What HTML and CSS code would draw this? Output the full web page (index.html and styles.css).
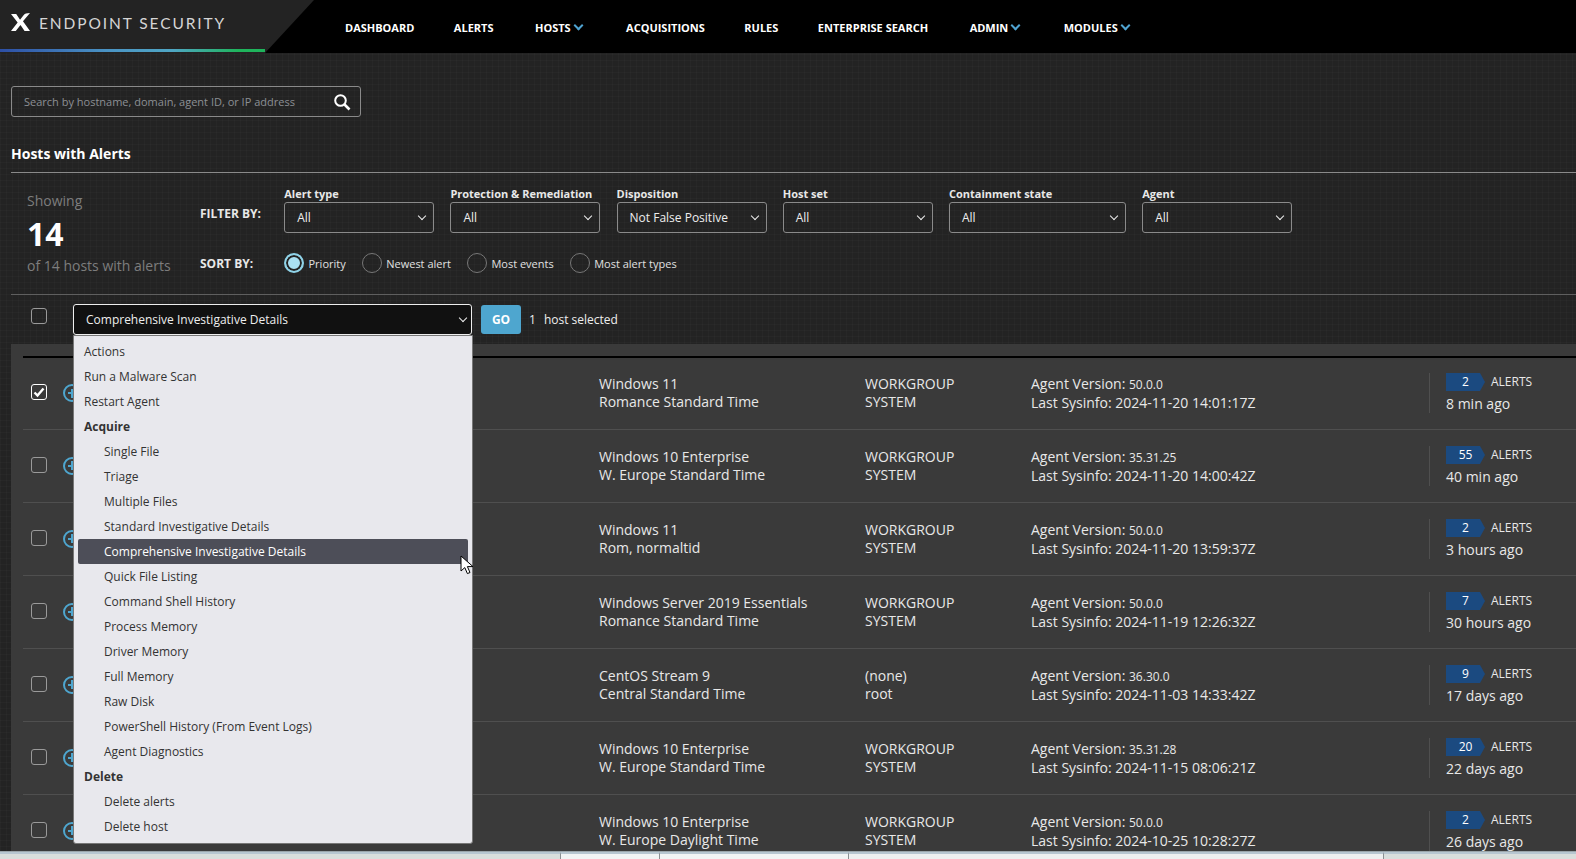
FILE: index.html
```html
<!DOCTYPE html>
<html lang="en">
<head>
    <meta charset="UTF-8">
    <title>Endpoint Security - Hosts with Alerts</title>
    <link rel="stylesheet" href="styles.css">
</head>
<body>
    <header class="topbar">
        <div class="brand">
            <svg class="brand-x" width="19" height="19" viewBox="0 0 20 20"><path d="M0 1h5.500l4 6 3.500-4.500c1.400-1.600 3.500-2.400 7-2.400l-7.400 8.600L20 19h-5.700l-4.300-6.500L5 19H0l7-9z" fill="#fff"/></svg>
            <span class="brand-name">ENDPOINT SECURITY</span>
        </div>
        <nav class="mainnav">
            <a>DASHBOARD</a>
            <a>ALERTS</a>
            <a class="pushed">HOSTS <i class="nav-caret"></i></a>
            <a>ACQUISITIONS</a>
            <a>RULES</a>
            <a>ENTERPRISE SEARCH</a>
            <a class="pushed">ADMIN <i class="nav-caret"></i></a>
            <a>MODULES <i class="nav-caret"></i></a>
        </nav>
    </header>

    <main class="page">
        <div class="search-box">
            <span>Search by hostname, domain, agent ID, or IP address</span>
            <svg width="18" height="18" viewBox="0 0 18 18" fill="none" stroke="#fff"><circle cx="7.500" cy="7.500" r="5.300" stroke-width="2"/><path d="M11.500 11.500l5 5" stroke-width="2.600"/></svg>
        </div>

        <h1 class="page-title">Hosts with Alerts</h1>

        <section class="filters">
            <div class="showing">
                <div class="showing-label">Showing</div>
                <div class="showing-count">14</div>
                <div class="showing-label">of 14 hosts with alerts</div>
            </div>
            <div class="filter-rows">
                <div class="filter-row">
                    <div class="row-label">FILTER BY:</div>
                    <label class="field w150">Alert type<span class="fake-select">All<i class="chev"></i></span></label>
                    <label class="field w150">Protection &amp; Remediation<span class="fake-select">All<i class="chev"></i></span></label>
                    <label class="field w150">Disposition<span class="fake-select">Not False Positive<i class="chev"></i></span></label>
                    <label class="field w150">Host set<span class="fake-select">All<i class="chev"></i></span></label>
                    <label class="field w177">Containment state<span class="fake-select">All<i class="chev"></i></span></label>
                    <label class="field w150">Agent<span class="fake-select">All<i class="chev"></i></span></label>
                </div>
                <div class="sort-row">
                    <div class="row-label">SORT BY:</div>
                    <span class="radio checked"><i></i>Priority</span>
                    <span class="radio"><i></i>Newest alert</span>
                    <span class="radio"><i></i>Most events</span>
                    <span class="radio"><i></i>Most alert types</span>
                </div>
            </div>
        </section>

        <section class="actionbar">
            <span class="check"></span>
            <div class="action-select">Comprehensive Investigative Details<i class="chev"></i></div>
            <button class="go-btn">GO</button>
            <span class="selected-count"><span class="selected-num">1</span>host selected</span>
        </section>

        <section class="hosts">
            <div class="host-row">
                <span class="check on"><svg width="14" height="14" viewBox="0 0 14 14" fill="none" stroke="#fff" stroke-width="2.400"><path d="M2.500 7.500l3 3 6-7"/></svg></span>
                <i class="expand"></i>
                <div class="host-name"></div>
                <div class="col-os">Windows 11<br>Romance Standard Time</div>
                <div class="col-domain">WORKGROUP<br>SYSTEM</div>
                <div class="col-agent">Agent Version: <small>50.0.0</small><br>Last Sysinfo: 2024-11-20 14:01:17Z</div>
                <div class="col-alerts"><div><b class="badge">2</b>ALERTS</div><div class="ago">8 min ago</div></div>
            </div>
            <div class="host-row">
                <span class="check"></span>
                <i class="expand"></i>
                <div class="host-name"></div>
                <div class="col-os">Windows 10 Enterprise<br>W. Europe Standard Time</div>
                <div class="col-domain">WORKGROUP<br>SYSTEM</div>
                <div class="col-agent">Agent Version: <small>35.31.25</small><br>Last Sysinfo: 2024-11-20 14:00:42Z</div>
                <div class="col-alerts"><div><b class="badge">55</b>ALERTS</div><div class="ago">40 min ago</div></div>
            </div>
            <div class="host-row">
                <span class="check"></span>
                <i class="expand"></i>
                <div class="host-name"></div>
                <div class="col-os">Windows 11<br>Rom, normaltid</div>
                <div class="col-domain">WORKGROUP<br>SYSTEM</div>
                <div class="col-agent">Agent Version: <small>50.0.0</small><br>Last Sysinfo: 2024-11-20 13:59:37Z</div>
                <div class="col-alerts"><div><b class="badge">2</b>ALERTS</div><div class="ago">3 hours ago</div></div>
            </div>
            <div class="host-row">
                <span class="check"></span>
                <i class="expand"></i>
                <div class="host-name"></div>
                <div class="col-os">Windows Server 2019 Essentials<br>Romance Standard Time</div>
                <div class="col-domain">WORKGROUP<br>SYSTEM</div>
                <div class="col-agent">Agent Version: <small>50.0.0</small><br>Last Sysinfo: 2024-11-19 12:26:32Z</div>
                <div class="col-alerts"><div><b class="badge">7</b>ALERTS</div><div class="ago">30 hours ago</div></div>
            </div>
            <div class="host-row">
                <span class="check"></span>
                <i class="expand"></i>
                <div class="host-name"></div>
                <div class="col-os">CentOS Stream 9<br>Central Standard Time</div>
                <div class="col-domain">(none)<br>root</div>
                <div class="col-agent">Agent Version: <small>36.30.0</small><br>Last Sysinfo: 2024-11-03 14:33:42Z</div>
                <div class="col-alerts"><div><b class="badge">9</b>ALERTS</div><div class="ago">17 days ago</div></div>
            </div>
            <div class="host-row">
                <span class="check"></span>
                <i class="expand"></i>
                <div class="host-name"></div>
                <div class="col-os">Windows 10 Enterprise<br>W. Europe Standard Time</div>
                <div class="col-domain">WORKGROUP<br>SYSTEM</div>
                <div class="col-agent">Agent Version: <small>35.31.28</small><br>Last Sysinfo: 2024-11-15 08:06:21Z</div>
                <div class="col-alerts"><div><b class="badge">20</b>ALERTS</div><div class="ago">22 days ago</div></div>
            </div>
            <div class="host-row">
                <span class="check"></span>
                <i class="expand"></i>
                <div class="host-name"></div>
                <div class="col-os">Windows 10 Enterprise<br>W. Europe Daylight Time</div>
                <div class="col-domain">WORKGROUP<br>SYSTEM</div>
                <div class="col-agent">Agent Version: <small>50.0.0</small><br>Last Sysinfo: 2024-10-25 10:28:27Z</div>
                <div class="col-alerts"><div><b class="badge">2</b>ALERTS</div><div class="ago">26 days ago</div></div>
            </div>
        </section>
    </main>

    <!-- open action list, sits over the host rows -->
    <ul class="action-menu">
        <li>Actions</li>
        <li>Run a Malware Scan</li>
        <li>Restart Agent</li>
        <li class="group">Acquire</li>
        <li class="sub">Single File</li>
        <li class="sub">Triage</li>
        <li class="sub">Multiple Files</li>
        <li class="sub">Standard Investigative Details</li>
        <li class="sub active">Comprehensive Investigative Details</li>
        <li class="sub">Quick File Listing</li>
        <li class="sub">Command Shell History</li>
        <li class="sub">Process Memory</li>
        <li class="sub">Driver Memory</li>
        <li class="sub">Full Memory</li>
        <li class="sub">Raw Disk</li>
        <li class="sub">PowerShell History (From Event Logs)</li>
        <li class="sub">Agent Diagnostics</li>
        <li class="group">Delete</li>
        <li class="sub">Delete alerts</li>
        <li class="sub">Delete host</li>
    </ul>
    <svg class="mouse-cursor" width="14" height="21" viewBox="0 0 14 21"><path d="M1 1v15l3.800-3.400 2.600 6 2.600-1.100-2.600-5.900H13z" fill="#fff" stroke="#000"/></svg>

    <!-- edge of the window underneath -->
    <div class="bottom-strip">
        <div class="strip-cell w561"></div>
        <div class="strip-cell w99"></div>
        <div class="strip-cell w189"></div>
        <div class="strip-cell w535"></div>
        <div class="strip-cell grow"></div>
    </div>
</body>
</html>
```

FILE: styles.css
```css
html, body {
    margin: 0;
    height: 100%;
    overflow: hidden;
}

body {
    position: relative;
    font-family: "Open Sans", "Noto Sans", sans-serif;
    color: #e6e6e6;
    background-color: #232323;
    background-image:
        linear-gradient(rgba(255,255,255,0.018) 1px, transparent 1px),
        linear-gradient(90deg, rgba(255,255,255,0.018) 1px, transparent 1px);
    background-size: 6px 6px;
}

/* top bar */
.topbar {
    display: flex;
    height: 53px;
    background-color: #000;
}

.brand {
    position: relative;
    display: flex;
    align-items: flex-start;
    gap: 9px;
    box-sizing: border-box;
    width: 314px;
    height: 53px;
    padding: 13px 0 0 11px;
    background: #232323;
    clip-path: polygon(0 0, 100% 0, 265px 100%, 0 100%);
}

.brand::after {
    content: "";
    position: absolute;
    left: 0;
    bottom: 1px;
    width: 265px;
    height: 3px;
    background: linear-gradient(90deg, #2d4fa5 0%, #4a93c4 40%, #4fa6c4 65%, #1fb45c 90%);
}

.brand-name {
    font-family: "Lato", "Open Sans", sans-serif;
    font-size: 15.500px;
    letter-spacing: 1.900px;
    line-height: 20px;
    color: #d5d5d5;
}

.mainnav {
    display: flex;
    align-items: center;
    gap: 39.500px;
    padding: 2px 0 0 31px;
}

.mainnav a {
    font-size: 11px;
    font-weight: 700;
    color: #fff;
}

.mainnav .pushed {
    margin-left: 2px;
}

.nav-caret {
    display: inline-block;
    width: 5px;
    height: 5px;
    margin: 0 5px 3px 1px;
    border-right: 2.500px solid #4fa3d1;
    border-bottom: 2.500px solid #4fa3d1;
    transform: rotate(45deg);
}

/* page */
.page {
    padding: 33px 0 0 11px;
}

.search-box {
    display: flex;
    align-items: center;
    justify-content: space-between;
    box-sizing: border-box;
    width: 350px;
    height: 31px;
    padding: 0 9px 0 12px;
    border: 1px solid #8a8a8a;
    border-radius: 3px;
    font-size: 11px;
    color: #8c8f94;
}

.page-title {
    margin: 27px 0 0;
    height: 28px;
    font-size: 14px;
    line-height: 20px;
    font-weight: 700;
    color: #fff;
    border-bottom: 1px solid #8a8a8a;
}

/* filters */
.filters {
    display: flex;
    height: 121px;
    border-bottom: 1px solid #5f5f5f;
}

.showing {
    width: 189px;
    padding: 18px 0 0 16px;
    box-sizing: border-box;
}

.showing-label {
    font-size: 14px;
    line-height: 20px;
    color: #7d7d7d;
}

.showing-count {
    height: 44px;
    margin-top: 1px;
    font-size: 32px;
    line-height: 44px;
    font-weight: 700;
    color: #fff;
}

.filter-rows {
    padding-top: 13px;
}

.filter-row {
    display: flex;
    gap: 16.200px;
}

.row-label {
    width: 68px;
    font-size: 12px;
    font-weight: 700;
    color: #e8e8e8;
    align-self: center;
}

.filter-row .row-label {
    padding-top: 7px;
}

.field {
    display: flex;
    flex-direction: column;
    font-size: 11px;
    line-height: 15px;
    font-weight: 700;
    color: #e8e8e8;
}

.w150 { width: 150px; }
.w177 { width: 177px; }

.fake-select {
    position: relative;
    box-sizing: border-box;
    height: 31px;
    margin-top: 1px;
    padding-left: 12px;
    border: 1px solid #8a8a8a;
    border-radius: 3px;
    font-size: 12px;
    font-weight: 400;
    line-height: 29px;
    color: #eee;
}

.chev {
    position: absolute;
    top: 10px;
    right: 8px;
    width: 5px;
    height: 5px;
    border-right: 1.500px solid #eee;
    border-bottom: 1.500px solid #eee;
    transform: rotate(45deg);
}

.sort-row {
    display: flex;
    align-items: center;
    margin-top: 15px;
    height: 30px;
    gap: 16px;
}

.radio {
    display: flex;
    align-items: center;
    gap: 4.500px;
    font-size: 11px;
    color: #e0e0e0;
}

.radio i {
    display: block;
    box-sizing: border-box;
    width: 20px;
    height: 20px;
    border: 1px solid #777;
    border-radius: 50%;
}

.radio.checked i {
    border: 2px solid #8fd3e8;
    background: #a9e0f2;
    box-shadow: inset 0 0 0 2px #232323;
}

/* bulk action bar */
.actionbar {
    display: flex;
    align-items: center;
    height: 49px;
    padding-left: 20px;
}

.check {
    display: flex;
    align-items: center;
    justify-content: center;
    flex: none;
    box-sizing: border-box;
    width: 16px;
    height: 16px;
    border: 1px solid #9a9a9a;
    border-radius: 3px;
}

.actionbar .check {
    margin-bottom: 7px;
}

.check.on {
    border-color: #fff;
}

.action-select {
    position: relative;
    box-sizing: border-box;
    width: 399px;
    height: 31px;
    margin-left: 26px;
    padding-left: 12px;
    border: 1px solid #eee;
    border-radius: 3px;
    background: #111;
    font-size: 12px;
    line-height: 29px;
    color: #eee;
}

.action-select .chev {
    right: 5px;
}

.go-btn {
    width: 40px;
    height: 29px;
    margin-left: 9px;
    border: 0;
    border-radius: 3px;
    background: #4ea6cf;
    color: #fff;
    font-family: inherit;
    font-size: 12px;
    font-weight: 700;
}

.selected-count {
    margin-left: 8px;
    font-size: 12px;
    color: #eee;
}

.selected-num {
    margin-right: 8px;
}

/* host list */
.hosts {
    box-sizing: border-box;
    height: 520px;
    padding: 12px 0 0 12px;
    background: #3a3a3a;
    overflow: hidden;
}

.host-row {
    display: flex;
    align-items: center;
    height: 73px;
    box-sizing: border-box;
    border-bottom: 1px solid #4f4f4f;
    font-size: 14px;
    line-height: 18px;
    color: #e8e8e8;
}

.host-row:first-child {
    border-top: 2px solid #000;
    height: 74px;
}

.host-row:first-child .col-os,
.host-row:first-child .col-domain {
    margin-top: -2px;
}

.host-row .check {
    margin: 0 0 3px 8px;
}

.expand {
    display: block;
    flex: none;
    box-sizing: border-box;
    width: 18px;
    height: 18px;
    margin: 0 0 1px 16px;
    border: 2.500px solid #4ea6cf;
    border-radius: 50%;
    background:
        linear-gradient(#4ea6cf, #4ea6cf) center / 9px 2px no-repeat,
        linear-gradient(#4ea6cf, #4ea6cf) center / 2px 9px no-repeat;
}

.host-name { width: 518px; flex: none; }
.col-os { width: 266px; flex: none; }
.col-domain { width: 166px; flex: none; }
.col-agent { width: 398px; flex: none; }

.col-agent small {
    font-size: 12px;
}

.col-alerts {
    box-sizing: border-box;
    height: 40px;
    margin-top: -1px;
    padding-left: 16px;
    border-left: 1px solid #4f4f4f;
    font-size: 12px;
    line-height: 18px;
}

.badge {
    position: relative;
    display: inline-block;
    box-sizing: border-box;
    width: 34px;
    height: 18px;
    margin-right: 11px;
    padding-left: 5px;
    background: #1b4a80;
    font-weight: 400;
    text-align: center;
    color: #fff;
}

.badge::after {
    content: "";
    position: absolute;
    left: 100%;
    top: 0;
    border-left: 5px solid #1b4a80;
    border-top: 9px solid transparent;
    border-bottom: 9px solid transparent;
}

.ago {
    margin-top: 4px;
    font-size: 14px;
}

/* dropdown list, overlays the rows */
.action-menu {
    position: absolute;
    left: 73px;
    top: 335px;
    box-sizing: border-box;
    width: 400px;
    height: 509px;
    margin: 0;
    padding: 3px 4px;
    list-style: none;
    background: #e8e8ed;
    border: 1px solid #777;
    border-radius: 0 0 3px 3px;
}

.action-menu li {
    height: 25px;
    padding-left: 6px;
    border-radius: 2px;
    font-size: 12px;
    line-height: 25px;
    color: #333;
}

.action-menu .group {
    font-weight: 700;
}

.action-menu .sub {
    padding-left: 26px;
}

.action-menu .active {
    background: #4d4e58;
    color: #fff;
}

.mouse-cursor {
    position: absolute;
    left: 460px;
    top: 555px;
}

.bottom-strip {
    position: absolute;
    left: 0;
    right: 0;
    bottom: 0;
    display: flex;
    height: 8px;
    box-sizing: border-box;
    border-top: 1px solid #9aa5aa;
    background: #d9dedc;
}

.strip-cell {
    box-sizing: border-box;
    border-top: 2px solid #b7c6d0;
    border-right: 1px solid #8a8f92;
}

.w561 { width: 561px; }
.w99 { width: 99px; background: #f2f4f4; }
.w189 { width: 189px; background: #f2f4f4; }
.w535 { width: 535px; background: #eef0f0; }
.grow { flex: 1; border-right: 0; }
```
